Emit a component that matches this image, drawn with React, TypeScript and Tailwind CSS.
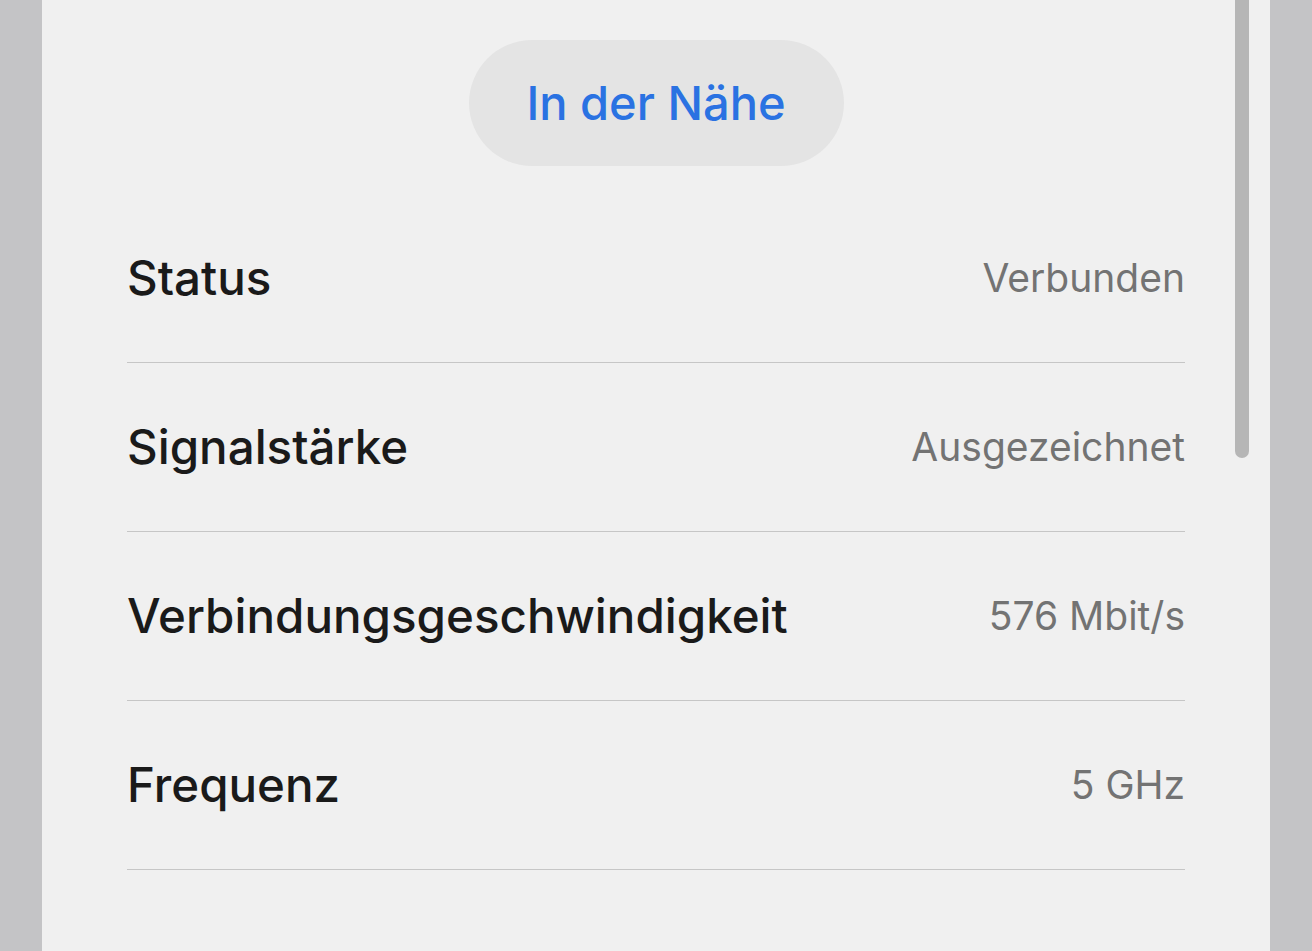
const rows = [
  { label: 'Status', value: 'Verbunden' },
  { label: 'Signalstärke', value: 'Ausgezeichnet' },
  { label: 'Verbindungsgeschwindigkeit', value: '576 Mbit/s' },
  { label: 'Frequenz', value: '5 GHz' },
];

export default function App() {
  return (
    <div
      className="flex h-[951px] w-[1312px] overflow-hidden bg-[#c4c4c6]"
      style={{ fontFamily: 'Inter, "Noto Sans", sans-serif' }}
    >
      <div className="ml-[42px] flex w-[1228px] bg-[#f0f0f0]">
        <div className="flex flex-1 flex-col pl-[85px] pr-[50px]">
          <div className="flex justify-center pt-[40px]">
            <div className="flex h-[126px] w-[375px] items-center justify-center rounded-full bg-[#e4e4e4] text-[47px] font-medium text-[#2a72e2]">
              In der Nähe
            </div>
          </div>
          <div className="mt-[28px] flex flex-col">
            {rows.map((row) => (
              <div
                key={row.label}
                className="flex h-[169px] items-center justify-between border-b border-[#c6c6c6]"
              >
                <span className="text-[47.5px] font-medium text-[#1a1a1a]">{row.label}</span>
                <span className="text-[39px] text-[#737373]">{row.value}</span>
              </div>
            ))}
          </div>
        </div>
        <div className="mr-[21px] w-[14px] shrink-0">
          <div className="h-[458px] rounded-b-full bg-[#b6b6b6]" />
        </div>
      </div>
    </div>
  );
}
